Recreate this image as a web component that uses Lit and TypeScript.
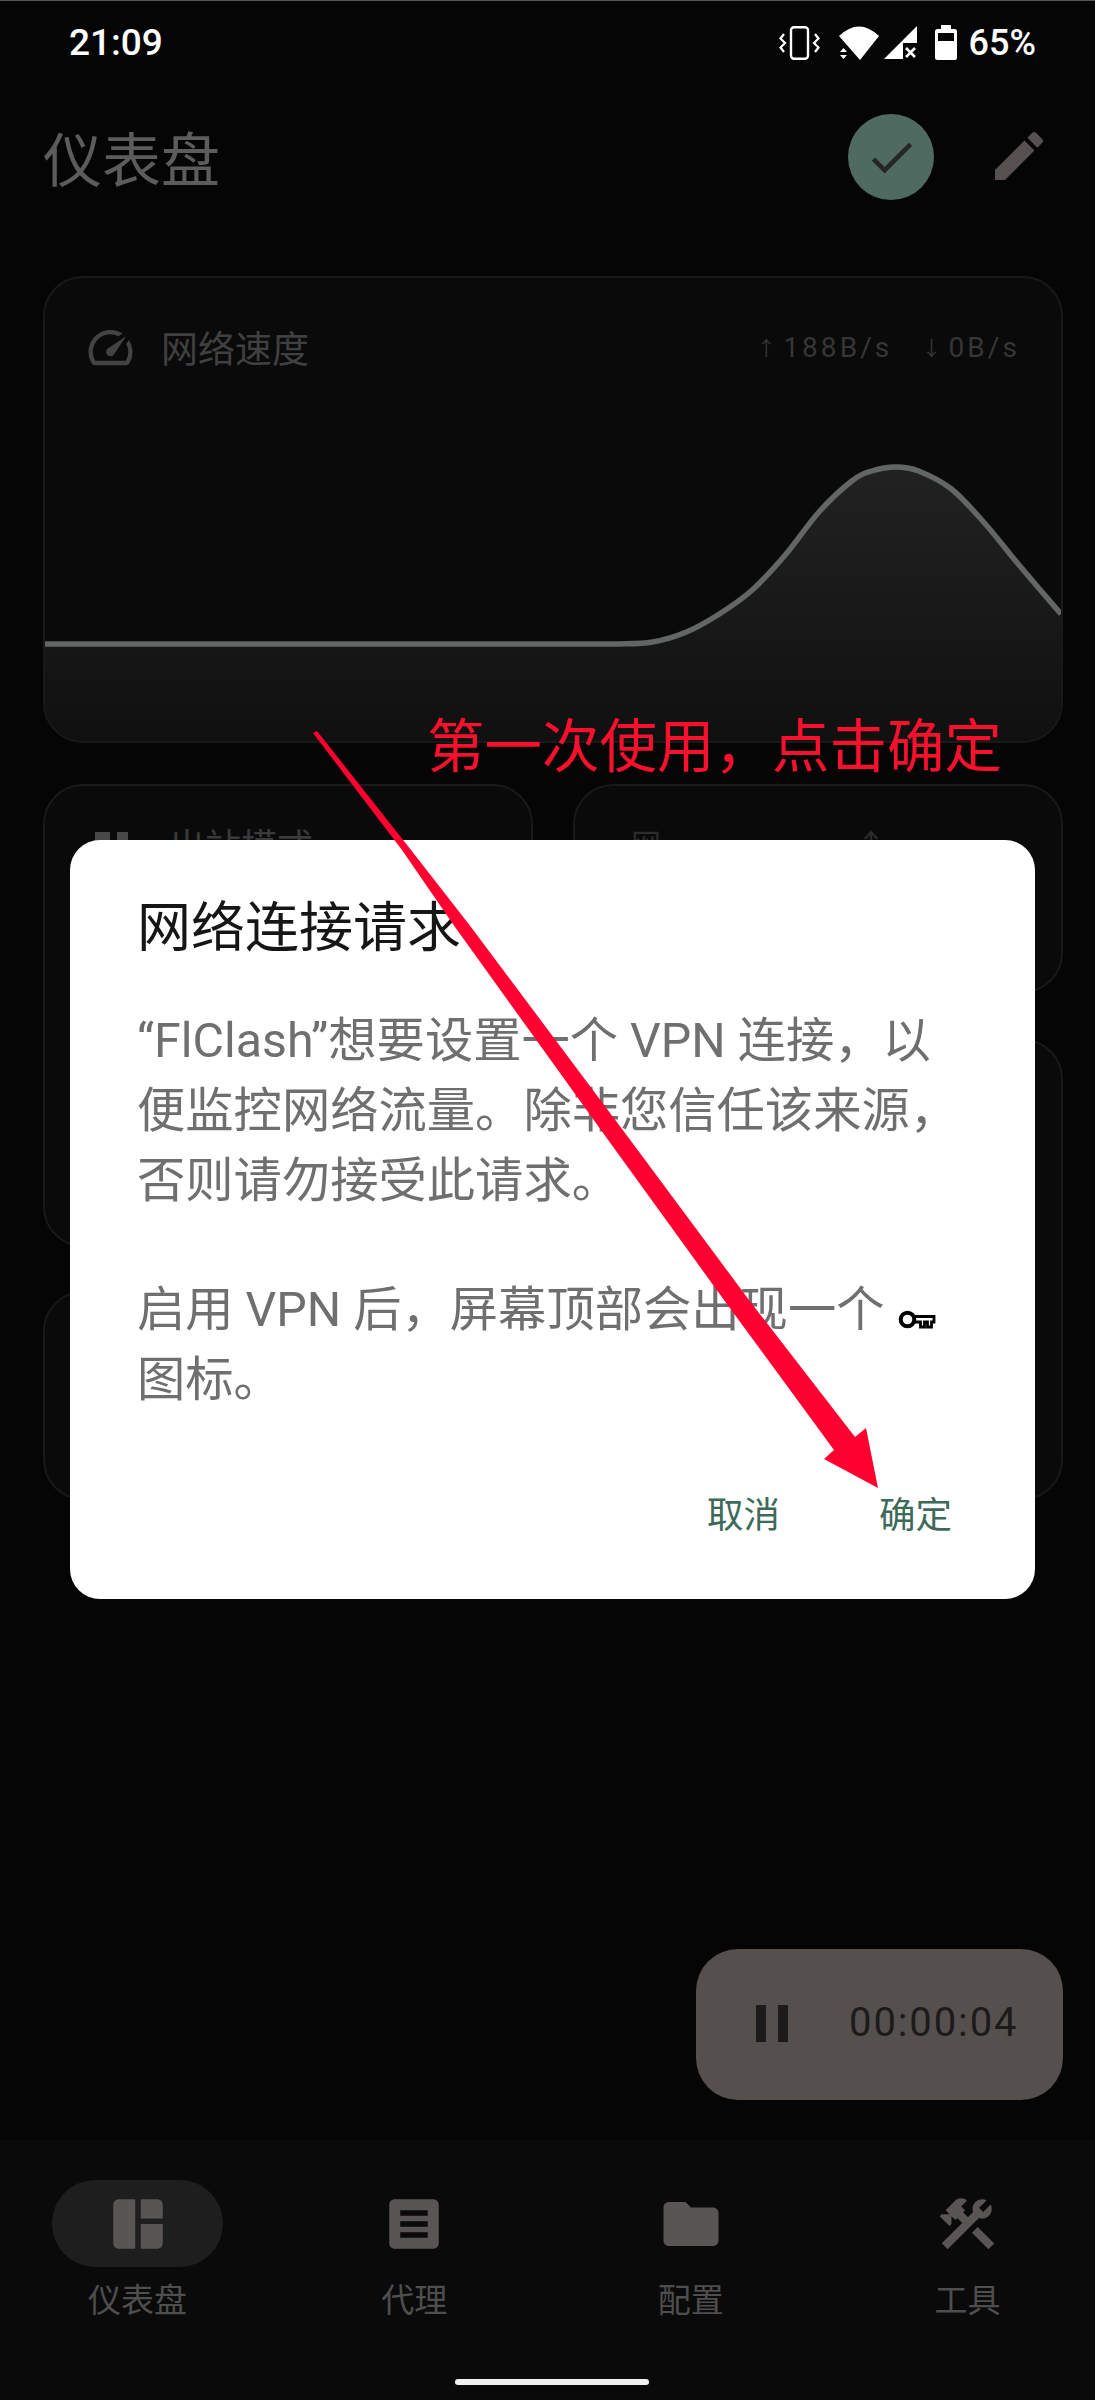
import { LitElement, html, css } from "lit";
import { customElement } from "lit/decorators.js";

const CURVE: [number, number][] = [
  [43, 645], [620, 645], [653, 643], [687, 633], [720, 615], [753, 591], [787, 555], [820, 513],
  [853, 482], [873, 472], [897, 468], [920, 472], [953, 490], [987, 525], [1020, 565], [1063, 615],
];

function smoothPath(pts: [number, number][]): string {
  let d = `M${pts[0][0]} ${pts[0][1]} L${pts[1][0]} ${pts[1][1]}`;
  for (let i = 1; i < pts.length - 1; i++) {
    const p0 = i === 1 ? pts[1] : pts[i - 1];
    const p1 = pts[i];
    const p2 = pts[i + 1];
    const p3 = pts[Math.min(i + 2, pts.length - 1)];
    const c1x = p1[0] + (p2[0] - p0[0]) / 6;
    const c1y = p1[1] + (p2[1] - p0[1]) / 6;
    const c2x = p2[0] - (p3[0] - p1[0]) / 6;
    const c2y = p2[1] - (p3[1] - p1[1]) / 6;
    d += ` C${c1x.toFixed(1)} ${c1y.toFixed(1)} ${c2x.toFixed(1)} ${c2y.toFixed(1)} ${p2[0]} ${p2[1]}`;
  }
  return d;
}

const NAV_ITEMS = [
  { label: "仪表盘", active: true, d: "M11 21H5c-1.1 0-2-.9-2-2V5c0-1.1.9-2 2-2h6v18zm2 0h6c1.1 0 2-.9 2-2v-7h-8v9zm8-11V5c0-1.1-.9-2-2-2h-6v7h8z" },
  { label: "代理", active: false, d: "M19 3H5c-1.1 0-2 .9-2 2v14c0 1.1.9 2 2 2h14c1.1 0 2-.9 2-2V5c0-1.1-.9-2-2-2zm-2 14H7v-2h10v2zm0-4H7v-2h10v2zm0-4H7V7h10v2z" },
  { label: "配置", active: false, d: "M10 4H4c-1.1 0-1.99.9-1.99 2L2 18c0 1.1.9 2 2 2h16c1.1 0 2-.9 2-2V8c0-1.1-.9-2-2-2h-8l-2-2z" },
  { label: "工具", active: false, d: "M13.783 15.172l2.121-2.121 5.996 5.996-2.121 2.121zM17.5 10c1.93 0 3.5-1.57 3.5-3.5 0-.58-.16-1.12-.41-1.6l-2.7 2.7-1.49-1.49 2.7-2.7c-.48-.25-1.02-.41-1.6-.41C15.57 3 14 4.57 14 6.5c0 .41.08.8.21 1.16l-1.85 1.85-1.78-1.78.71-.71-1.41-1.41L12 3.49c-1.17-1.17-3.07-1.17-4.24 0L4.22 7.03l1.41 1.41H2.81l-.71.71 3.54 3.54.71-.71V9.15l1.41 1.41.71-.71 1.78 1.78-7.41 7.41 2.12 2.12L16.34 9.79c.36.13.75.21 1.16.21z" },
];

@customElement("app-root")
export class AppRoot extends LitElement {
  static styles = css`
    :host {
      display: block;
      width: 1095px;
      height: 2400px;
      position: relative;
      overflow: hidden;
      background: #050505;
      font-family: Roboto, "Noto Sans CJK SC", sans-serif;
    }
    .page { display: flex; flex-direction: column; height: 2400px; }
    .status {
      height: 84px; box-sizing: border-box; border-top: 1px solid #555;
      display: flex; align-items: center; justify-content: space-between;
      padding: 0 59px 0 69px; color: #fff; font-size: 37px; font-weight: 500;
    }
    .status-right { display: flex; align-items: center; font-size: 36px; }
    .status-right svg { display: block; fill: #fff; }
    .s-vib { margin-right: 19px; }
    .s-wifi { margin-right: 5px; }
    .s-sig { margin-right: 18px; }
    .s-bat { margin-right: 12px; }
    .appbar {
      height: 146px; display: flex; align-items: center;
      padding: 0 44px 0 43px;
    }
    .title { font-size: 59px; line-height: 1; color: #5c5c5c; flex: 1; margin-top: 9px; }
    .check {
      width: 86px; height: 86px; border-radius: 50%; background: #4f6a61;
      display: flex; align-items: center; justify-content: center; margin-right: 53px;
    }
    .check svg { width: 55px; height: 55px; fill: #262626; }
    .pencil { width: 64px; height: 64px; fill: #565050; margin-top: -2px; }
    .content { flex: 1; padding: 46px 32px 0 43px; }
    .card {
      box-sizing: border-box; background: #0a0a0a; border: 2px solid #191919;
      border-radius: 40px; overflow: hidden;
    }
    .speed { height: 467px; display: flex; flex-direction: column; }
    .speed-head {
      display: flex; align-items: center; padding: 42px 41px 0 39px; color: #404040;
    }
    .speed-head svg { width: 53px; height: 53px; fill: #434343; margin-right: 24px; }
    .speed-title { font-size: 37px; flex: 1; }
    .rate { font-size: 28px; letter-spacing: 3.1px; color: #363636; margin-left: 29px; display: flex; align-items: center; }
    .ar { font-size: 20px; letter-spacing: 0; margin-right: 7px; }
    .chart { margin-top: auto; display: block; width: 100%; height: 300px; }
    .columns { display: grid; grid-template-columns: 1fr 1fr; gap: 40px; margin-top: 41px; }
    .col { display: flex; flex-direction: column; }
    .h-463 { height: 463px; }
    .h-209 { height: 209px; }
    .h-461 { height: 461px; }
    .gap-44 { margin-top: 44px; }
    .gap-46 { margin-top: 46px; }
    .peek-left {
      display: flex; align-items: flex-start; padding: 42px 0 0 50px; color: #3a3a3a; font-size: 36px; line-height: 40px;
    }
    .peek-left i { width: 15px; height: 18px; background: #484848; display: block; margin: 4px 7px 0 0; }
    .peek-left i + i { width: 11px; margin-right: 41px; }
    .peek-right {
      display: flex; justify-content: space-between; padding: 42px 175px 0 56px; color: #2c2c2c; font-size: 30px; line-height: 34px;
    }
    .fab {
      position: absolute; left: 696px; top: 1949px; width: 367px; height: 151px;
      box-sizing: border-box; background: #554f4e; border-radius: 42px;
      display: flex; align-items: center; padding-left: 60px; gap: 61px; color: #1c1a1a;
    }
    .pause { display: flex; gap: 12px; margin-top: -2px; }
    .pause i { display: block; width: 10px; height: 37px; background: #1c1a1a; }
    .clock { font-size: 40px; letter-spacing: 1.9px; margin-top: -4px; }
    .nav { background: #0a0a0a; height: 260px; display: flex; flex-direction: column; }
    .nav-row {
      display: flex; justify-content: space-between; padding: 40px 42px 0 52px;
    }
    .nav-item { width: 171px; display: flex; flex-direction: column; align-items: center; }
    .nav-icon {
      width: 171px; height: 87px; border-radius: 44px;
      display: flex; align-items: center; justify-content: center;
    }
    .nav-icon.active { background: #1e1e1e; }
    .nav-icon svg { width: 66px; height: 66px; fill: #5a5555; }
    .nav-label { margin-top: 14px; font-size: 33px; line-height: 40px; color: #4e4e4e; }
    .home {
      width: 194px; height: 6px; border-radius: 3px; background: #f0f0f0;
      margin: 58px 0 0 455px;
    }
    .scrim {
      position: absolute; inset: 0; padding: 840px 0 0 70px; box-sizing: border-box;
    }
    .dialog {
      width: 965px; height: 759px; box-sizing: border-box; background: #fff;
      border-radius: 30px; padding: 65px 70px 0 67px;
    }
    .d-title { font-size: 54px; line-height: 48px; color: #161616; }
    .d-body { font-size: 48.3px; line-height: 70px; color: #6f6f6f; }
    .d-body.first { margin-top: 53px; }
    .d-body.second { margin-top: 59px; }
    .key { width: 38px; height: 21px; vertical-align: -4px; margin-left: 2px; }
    .actions {
      display: flex; justify-content: flex-end; gap: 99px; margin: 81px 13px 0 0;
      font-size: 36.5px; line-height: 40px; color: #3d6a59;
    }
    .note {
      position: absolute; left: 427px; top: 706px; font-size: 57.5px; line-height: 72px;
      color: #f8102c; white-space: nowrap; font-family: "Noto Sans CJK SC", sans-serif;
    }
    .arrow { position: absolute; left: 0; top: 0; pointer-events: none; }
  `;

  render() {
    const line = smoothPath(CURVE);
    const area = `${line} L1063 742 L43 742 Z`;
    return html`
      <div class="page" lang="zh-CN">
        <div class="status">
          <span>21:09</span>
          <div class="status-right">
            <svg class="s-vib" width="41" height="34" viewBox="0 0 41 34">
              <rect x="12" y="1.2" width="17" height="31.6" rx="3" fill="none" stroke="#fff" stroke-width="2.4"></rect>
              <path d="M5 8L1.500 12.500 6 17 1.500 21.500 5 26M36 8l3.500 4.500L35 17l4.500 4.500L36 26" fill="none" stroke="#fff" stroke-width="2.2"></path>
            </svg>
            <svg class="s-wifi" width="40" height="34" viewBox="0 0 40 34">
              <path d="M0 10Q20-9 40 10L21 34Z"></path>
              <path d="M1 26h7l-3.500-4zM1 29h7l-3.500 4z"></path>
            </svg>
            <svg class="s-sig" width="33" height="33" viewBox="0 0 33 33">
              <path d="M0 33L33 0V17H19V33Z"></path>
              <path d="M22 22l9 9M31 22l-9 9" stroke="#fff" stroke-width="2.600" fill="none"></path>
            </svg>
            <svg class="s-bat" width="22" height="35" viewBox="0 0 22 35">
              <rect x="6" y="0" width="10" height="5"></rect>
              <rect x="0" y="4" width="22" height="31" rx="2.500"></rect>
              <rect x="3" y="8" width="16" height="8" fill="#050505"></rect>
            </svg>
            <span>65%</span>
          </div>
        </div>

        <div class="appbar">
          <div class="title">仪表盘</div>
          <div class="check">
            <svg viewBox="0 0 24 24"><path d="M9 16.170L4.830 12l-1.420 1.410L9 19 21 7l-1.410-1.410z"></path></svg>
          </div>
          <svg class="pencil" viewBox="0 0 24 24"><path d="M3 17.250V21h3.750L17.810 9.940l-3.750-3.750L3 17.250zM20.710 7.040c.39-.39.39-1.020 0-1.410l-2.340-2.340c-.39-.39-1.020-.39-1.410 0l-1.830 1.830 3.750 3.750 1.830-1.830z"></path></svg>
        </div>

        <div class="content">
          <div class="card speed">
            <div class="speed-head">
              <svg viewBox="0 0 24 24"><path d="M20.380 8.570l-1.230 1.850a8 8 0 0 1-.22 7.580H5.070A8 8 0 0 1 15.580 6.850l1.850-1.230A10 10 0 0 0 3.350 19a2 2 0 0 0 1.720 1h13.850a2 2 0 0 0 1.740-1 10 10 0 0 0-.27-10.440zm-9.790 6.840a2 2 0 0 0 2.830 0l5.660-8.490-8.490 5.660a2 2 0 0 0 0 2.830z"></path></svg>
              <span class="speed-title">网络速度</span>
              <span class="rate"><span class="ar">↑</span>188B/s</span>
              <span class="rate"><span class="ar">↓</span>0B/s</span>
            </div>
            <svg class="chart" viewBox="43 442 1020 300" preserveAspectRatio="none">
              <defs>
                <linearGradient id="fill" x1="0" y1="0" x2="0" y2="1">
                  <stop offset="0" stop-color="#222"></stop>
                  <stop offset="1" stop-color="#101010"></stop>
                </linearGradient>
              </defs>
              <path d=${area} fill="url(#fill)"></path>
              <path d=${line} fill="none" stroke="#626665" stroke-width="5.5"></path>
            </svg>
          </div>
          <div class="columns">
            <div class="col">
              <div class="card h-463">
                <div class="peek-left"><i></i><i></i><span>出站模式</span></div>
              </div>
              <div class="card h-209 gap-44"></div>
            </div>
            <div class="col">
              <div class="card h-209">
                <div class="peek-right"><span>网</span><span>↑</span></div>
              </div>
              <div class="card h-461 gap-46"></div>
            </div>
          </div>
        </div>

        <div class="nav">
          <div class="nav-row">
            ${NAV_ITEMS.map(
              (n) => html`
                <div class="nav-item">
                  <div class="nav-icon ${n.active ? "active" : ""}">
                    <svg viewBox="0 0 24 24"><path d=${n.d}></path></svg>
                  </div>
                  <div class="nav-label">${n.label}</div>
                </div>
              `
            )}
          </div>
          <div class="home"></div>
        </div>
      </div>

      <div class="fab">
        <div class="pause"><i></i><i></i></div>
        <span class="clock">00:00:04</span>
      </div>

      <div class="scrim" lang="zh-CN">
        <div class="dialog">
          <div class="d-title">网络连接请求</div>
          <div class="d-body first">“FlClash”想要设置一个 VPN 连接，以便监控网络流量。除非您信任该来源，否则请勿接受此请求。</div>
          <div class="d-body second">启用 VPN 后，屏幕顶部会出现一个 <svg class="key" viewBox="0 0 38 21"><path d="M16 7.500h20v5.500h-2.500v5h-4v-5h-3v5h-4v-5H16" fill="#fff" stroke="#000" stroke-width="2.800"></path><circle cx="9.500" cy="10.500" r="6.800" fill="#fff" stroke="#000" stroke-width="4"></circle></svg> 图标。</div>
          <div class="actions"><span>取消</span><span>确定</span></div>
        </div>
      </div>

      <div class="note" lang="zh-CN">第一次使用，点击确定</div>
      <svg class="arrow" width="1095" height="2400" viewBox="0 0 1095 2400">
        <polygon points="313,733 317,731 411,850 471,927 628,1137 749,1300 855,1437 866,1428 878,1488 824,1459 834,1450 724,1300 606,1137 455,927 402,850" fill="#ff0030"></polygon>
      </svg>
    `;
  }
}
